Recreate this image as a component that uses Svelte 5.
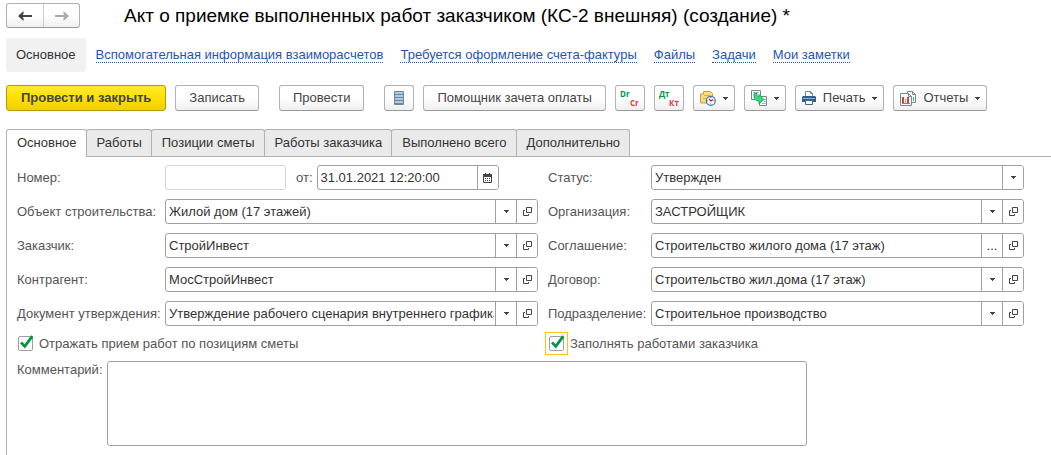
<script lang="ts">
  const links = [
    "Вспомогательная информация взаиморасчетов",
    "Требуется оформление счета-фактуры",
    "Файлы",
    "Задачи",
    "Мои заметки",
  ];

  const tabs = [
    "Основное",
    "Работы",
    "Позиции сметы",
    "Работы заказчика",
    "Выполнено всего",
    "Дополнительно",
  ];
  let activeTab = $state("Основное");

  let number = $state("");
  let date = $state("31.01.2021 12:20:00");
  let status = $state("Утвержден");
  let byPositions = $state(true);
  let fillWorks = $state(true);
  let comment = $state("");

  // left and right field of each row, below the number / status row
  let fields = $state([
    { id: "object", label: "Объект строительства:", value: "Жилой дом (17 этажей)", pick: "list" },
    { id: "org", label: "Организация:", value: "ЗАСТРОЙЩИК", pick: "list" },
    { id: "customer", label: "Заказчик:", value: "СтройИнвест", pick: "list" },
    { id: "agreement", label: "Соглашение:", value: "Строительство жилого дома (17 этаж)", pick: "dots" },
    { id: "partner", label: "Контрагент:", value: "МосСтройИнвест", pick: "list" },
    { id: "contract", label: "Договор:", value: "Строительство жил.дома (17 этаж)", pick: "list" },
    { id: "document", label: "Документ утверждения:", value: "Утверждение рабочего сценария внутреннего графика", pick: "list" },
    { id: "department", label: "Подразделение:", value: "Строительное производство", pick: "list" },
  ]);
</script>

{#snippet caret()}
  <svg class="caret" width="5" height="3" viewBox="0 0 5 3" aria-hidden="true">
    <path d="M0 0h5v1h-1v1h-1v1h-1v-1h-1v-1h-1z" fill="#444" />
  </svg>
{/snippet}

{#snippet tick()}
  <svg class="tick" width="15" height="15" viewBox="0 0 15 15" aria-hidden="true">
    <path d="M2 7.5 5.8 11.4 13.3 1.2" fill="none" stroke="#009646" stroke-width="2.8" />
  </svg>
{/snippet}

<main>
  <header>
    <div class="history">
      <button type="button" aria-label="Назад">
        <svg width="14" height="10" viewBox="0 0 14 10">
          <path d="M14 5H3" fill="none" stroke="#444" stroke-width="2" />
          <path d="M5.500 0 0 5l5.500 5V7L3.500 5l2-2z" fill="#444" />
        </svg>
      </button>
      <button type="button" aria-label="Вперед">
        <svg width="14" height="10" viewBox="0 0 14 10">
          <path d="M0 5h11" fill="none" stroke="#aaa" stroke-width="2" />
          <path d="M8.500 0 14 5l-5.500 5V7l2-2-2-2z" fill="#aaa" />
        </svg>
      </button>
    </div>
    <h1>Акт о приемке выполненных работ заказчиком (КС-2 внешняя) (создание) *</h1>
  </header>

  <nav>
    <span class="current">Основное</span>
    {#each links as link}
      <a href="#top">{link}</a>
    {/each}
  </nav>

  <div class="toolbar">
    <button type="button" class="btn primary">Провести и закрыть</button>
    <button type="button" class="btn">Записать</button>
    <button type="button" class="btn apart">Провести</button>
    <button type="button" class="btn icon apart" aria-label="Список">
      <svg width="10" height="14" viewBox="0 0 10 14">
        <rect width="10" height="14" rx="1" fill="#6588a5" />
        <path d="M1 2h8M1 5h8M1 8h8M1 11h8" stroke="#b0cadd" stroke-width="2" />
      </svg>
    </button>
    <button type="button" class="btn">Помощник зачета оплаты</button>
    <button type="button" class="btn icon" aria-label="Dr Cr">
      <svg width="24" height="24" viewBox="0 0 24 24">
        <text class="mini" x="2" y="11" fill="#009646">Dr</text>
        <text class="mini" x="12" y="20" fill="#e23b3b">Cr</text>
      </svg>
    </button>
    <button type="button" class="btn icon" aria-label="Дт Кт">
      <svg width="24" height="24" viewBox="0 0 24 24">
        <text class="mini" x="2" y="11" fill="#009646">Дт</text>
        <text class="mini" x="12" y="20" fill="#e23b3b">Кт</text>
      </svg>
    </button>
    <button type="button" class="btn menu" aria-label="Напоминание">
      <svg width="16" height="16" viewBox="0 0 16 16">
        <path d="M3.5 1.5h7l2 2v9.5h-12v-9h3z" fill="#f8dc80" stroke="#c9a03c" />
        <path d="M4 5.5h6M3 8.5h4" stroke="#d5b050" />
        <circle cx="10.8" cy="10.8" r="4.5" fill="#f5faff" stroke="#4a7bab" stroke-width="1.2" />
        <path d="M10.8 7v1M10.8 13.5v1M7 10.8h1M13.6 10.8h1" stroke="#4a7bab" />
        <path d="M9 9l2 2 2-1.5" fill="none" stroke="#e02020" stroke-width="1.2" />
      </svg>
      {@render caret()}
    </button>
    <button type="button" class="btn menu" aria-label="Создать на основании">
      <svg width="16" height="16" viewBox="0 0 16 16">
        <path d="M.5.5h9v9h-9z" fill="#fff" stroke="#71879b" />
        <path d="M2 2.500h6" stroke="#9eafbd" />
        <path d="M8.500 6.500h7v9h-7z" fill="#fff" stroke="#71879b" />
        <path d="M13 9.500h1.500M13 11.500h1.500M11 13.500h3.500" stroke="#9eafbd" />
        <path d="M3 3.500h3c0 2.500.5 3.500 2 3.500V4.500l5 5-5 4.500v-3C4.500 11 2.500 9 3 3.500z" fill="#35dc7e" stroke="#0c9c4c" stroke-width=".8" />
      </svg>
      {@render caret()}
    </button>
    <button type="button" class="btn menu">
      <svg width="14" height="14" viewBox="0 0 14 14">
        <path d="M3.500 5V.5h5l2 2V5" fill="#fff" stroke="#71879b" />
        <path d="M8.500.5v2h2" fill="none" stroke="#71879b" />
        <path d="M1 5h12l1 1v5H0V6z" fill="#2d5f8c" />
        <path d="M1 7.500h12" stroke="#8eb2d0" />
        <path d="M3.500 9.500h7v4h-7z" fill="#fff" stroke="#47657f" />
      </svg>
      <span>Печать</span>
      {@render caret()}
    </button>
    <button type="button" class="btn menu">
      <svg width="16" height="15" viewBox="0 0 16 15">
        <path d="M7.500.5h5l3 3v8h-8z" fill="#fff" stroke="#71879b" />
        <path d="M12.500.5v3h3" fill="none" stroke="#71879b" />
        <path d="M13.500 6v4" stroke="#35b060" />
        <path d="M.5 2.500h8l3 3v9H.5z" fill="#fff" stroke="#71879b" />
        <path d="M8.500 2.500v3h3" fill="none" stroke="#71879b" />
        <path d="M2 6h2v6H2z" fill="#e23b3b" />
        <path d="M5 8h1v4H5z" fill="#f0a030" />
        <path d="M7 6h2v6H7z" fill="#e23b3b" />
        <path d="M2 12.500h8" stroke="#71879b" />
      </svg>
      <span>Отчеты</span>
      {@render caret()}
    </button>
  </div>

  <div class="tabs" role="tablist">
    {#each tabs as tab}
      <button
        type="button"
        role="tab"
        aria-selected={tab === activeTab}
        class:active={tab === activeTab}
        onclick={() => (activeTab = tab)}>{tab}</button>
    {/each}
  </div>

  <section class="panel">
    <div class="form">
      <label for="number">Номер:</label>
      <div class="number-row">
        <input id="number" class="number" bind:value={number} />
        <label for="date">от:</label>
        <div class="field date">
          <input id="date" bind:value={date} />
          <button type="button" aria-label="Выбрать дату">
            <svg width="9" height="10" viewBox="0 0 9 10">
              <path d="M.5 1.500h8v8h-8z" fill="#fff" stroke="#444" />
              <path d="M0 2.500h9" stroke="#444" stroke-width="3" />
              <path d="M2.500 0v2M6.500 0v2" stroke="#444" />
              <path d="M2 5.500h5M2 7.500h5" stroke="#444" stroke-dasharray="1 1" />
            </svg>
          </button>
        </div>
      </div>
      <label class="second" for="status">Статус:</label>
      <div class="field">
        <select id="status" bind:value={status}>
          <option>Утвержден</option>
          <option>Подготовлен</option>
        </select>
        <span class="arrow">{@render caret()}</span>
      </div>

      {#each fields as field, i}
        <label class:second={i % 2 === 1} for={field.id}>{field.label}</label>
        <div class="field">
          <input id={field.id} bind:value={field.value} />
          <button type="button" aria-label="Выбрать">
            {#if field.pick === "dots"}
              ...
            {:else}
              {@render caret()}
            {/if}
          </button>
          <button type="button" aria-label="Открыть">
            <svg width="9" height="9" viewBox="0 0 9 9">
              <path d="M3.500.5h5v5h-5z" fill="none" stroke="#444" />
              <path d="M2 3.500H.5v5h5V7" fill="none" stroke="#444" />
            </svg>
          </button>
        </div>
      {/each}

      <label class="check">
        <span class="box"><input type="checkbox" bind:checked={byPositions} />{#if byPositions}{@render tick()}{/if}</span>
        Отражать прием работ по позициям сметы
      </label>
      <label class="check second">
        <span class="box focused"><input type="checkbox" bind:checked={fillWorks} />{#if fillWorks}{@render tick()}{/if}</span>
        Заполнять работами заказчика
      </label>
    </div>

    <div class="comment">
      <label for="comment">Комментарий:</label>
      <textarea id="comment" bind:value={comment}></textarea>
    </div>
  </section>
</main>

<style>
  :global(body) {
    margin: 0;
    background: #fff;
  }
  main {
    padding: 3px 0 0 6px;
    font: 13px/16px "Liberation Sans", Arial, sans-serif;
    color: #333;
  }
  button, input, select, textarea {
    box-sizing: border-box;
    margin: 0;
    font: inherit;
    color: inherit;
  }
  svg {
    display: block;
    flex: none;
  }
  header {
    display: flex;
    align-items: center;
    gap: 44px;
  }
  .history {
    display: flex;
    border: 1px solid #b2b2b2;
    border-bottom-color: #999;
    border-radius: 3px;
    background: linear-gradient(#fff 50%, #efefef);
  }
  .history button {
    display: grid;
    place-items: center;
    width: 36px;
    height: 23px;
    padding: 0;
    border: 0;
    background: none;
  }
  .history button + button {
    border-left: 1px solid #ccc;
  }
  h1 {
    margin: 0;
    font-size: 19px;
    line-height: 24px;
    font-weight: normal;
    color: #000;
    white-space: nowrap;
  }
  nav {
    display: flex;
    align-items: center;
    gap: 17px;
    margin-top: 10px;
    white-space: nowrap;
  }
  .current {
    padding: 9px 10px;
    margin-right: -7px;
    border-radius: 3px;
    background: #f1f1f1;
  }
  nav a {
    line-height: 14px;
    color: #1f55b5;
    text-decoration: none;
    border-bottom: 1px dotted #1f55b5;
  }
  .toolbar {
    display: flex;
    gap: 9px;
    margin-top: 13px;
  }
  .btn {
    display: flex;
    align-items: center;
    justify-content: center;
    height: 26px;
    padding: 0 13px;
    border: 1px solid #b2b2b2;
    border-bottom-color: #999;
    border-radius: 3px;
    background: linear-gradient(#fff 50%, #efefef);
    color: #444;
    white-space: nowrap;
  }
  .primary {
    padding: 0 14px;
    border-color: #b59a00;
    background: linear-gradient(#ffea32, #ffdf00 50%, #f2d000);
    font-weight: bold;
  }
  .apart {
    margin-left: 11px;
  }
  .icon {
    width: 30px;
    padding: 0;
  }
  .menu {
    gap: 7px;
    padding: 0 6px;
  }
  .mini {
    font: bold 8px "Open Sans", sans-serif;
  }
  .tabs {
    display: flex;
    margin-top: 18px;
    border-bottom: 1px solid #b2b2b2;
  }
  .tabs button {
    height: 27px;
    margin: 0 -1px 0 0;
    padding: 0 9px 0 10px;
    border: 1px solid #b2b2b2;
    border-bottom: 0;
    border-radius: 3px 3px 0 0;
    background: #eaeaea;
  }
  .tabs .active {
    height: 28px;
    margin-bottom: -1px;
    padding-bottom: 1px;
    background: #fff;
  }
  .panel {
    padding: 8px 27px 9px 10px;
    border-left: 1px solid #b2b2b2;
  }
  .form {
    display: grid;
    grid-template-columns: 148px minmax(0, 1fr) 113px minmax(0, 1fr);
    align-items: center;
    row-gap: 9px;
  }
  label {
    color: #555;
    white-space: nowrap;
  }
  .second {
    padding-left: 10px;
  }
  .field {
    display: flex;
    box-sizing: border-box;
    height: 25px;
    border: 1px solid #a0a0a0;
    border-radius: 3px;
    background: #fff;
    overflow: hidden;
  }
  .field input, .field select {
    flex: 1;
    min-width: 0;
    padding: 0 1px 0 3px;
    border: 0;
    outline: 0;
    background: none;
    appearance: none;
  }
  .field button, .arrow {
    display: grid;
    place-items: center;
    box-sizing: border-box;
    width: 21px;
    padding: 0;
    border: 0;
    border-left: 1px solid #a0a0a0;
    background: #fff;
  }
  .arrow {
    pointer-events: none;
  }
  .number-row {
    display: flex;
    align-items: center;
  }
  .number {
    width: 121px;
    height: 25px;
    margin-right: 10px;
    border: 1px solid #d5d5d5;
    border-radius: 3px;
  }
  .date {
    width: 182px;
    margin-left: 4px;
  }
  .check {
    display: flex;
    align-items: center;
    gap: 6px;
    grid-column: span 2;
    height: 17px;
    padding-left: 1px;
  }
  .check.second {
    padding-left: 11px;
  }
  .box {
    position: relative;
    display: flex;
  }
  .box input {
    width: 15px;
    height: 15px;
    border: 1px solid #a0a0a0;
    border-radius: 2px;
    outline: 0;
    appearance: none;
  }
  .focused {
    outline: 1px solid #ffc20e;
    outline-offset: 3px;
  }
  .tick {
    position: absolute;
    left: 1px;
    top: -1px;
    pointer-events: none;
  }
  .comment {
    display: flex;
    gap: 4px;
    margin-top: 9px;
  }
  .comment label {
    margin-top: 1px;
  }
  textarea {
    width: 700px;
    height: 85px;
    border: 1px solid #a0a0a0;
    border-radius: 3px;
    outline: 0;
    resize: none;
  }
</style>
